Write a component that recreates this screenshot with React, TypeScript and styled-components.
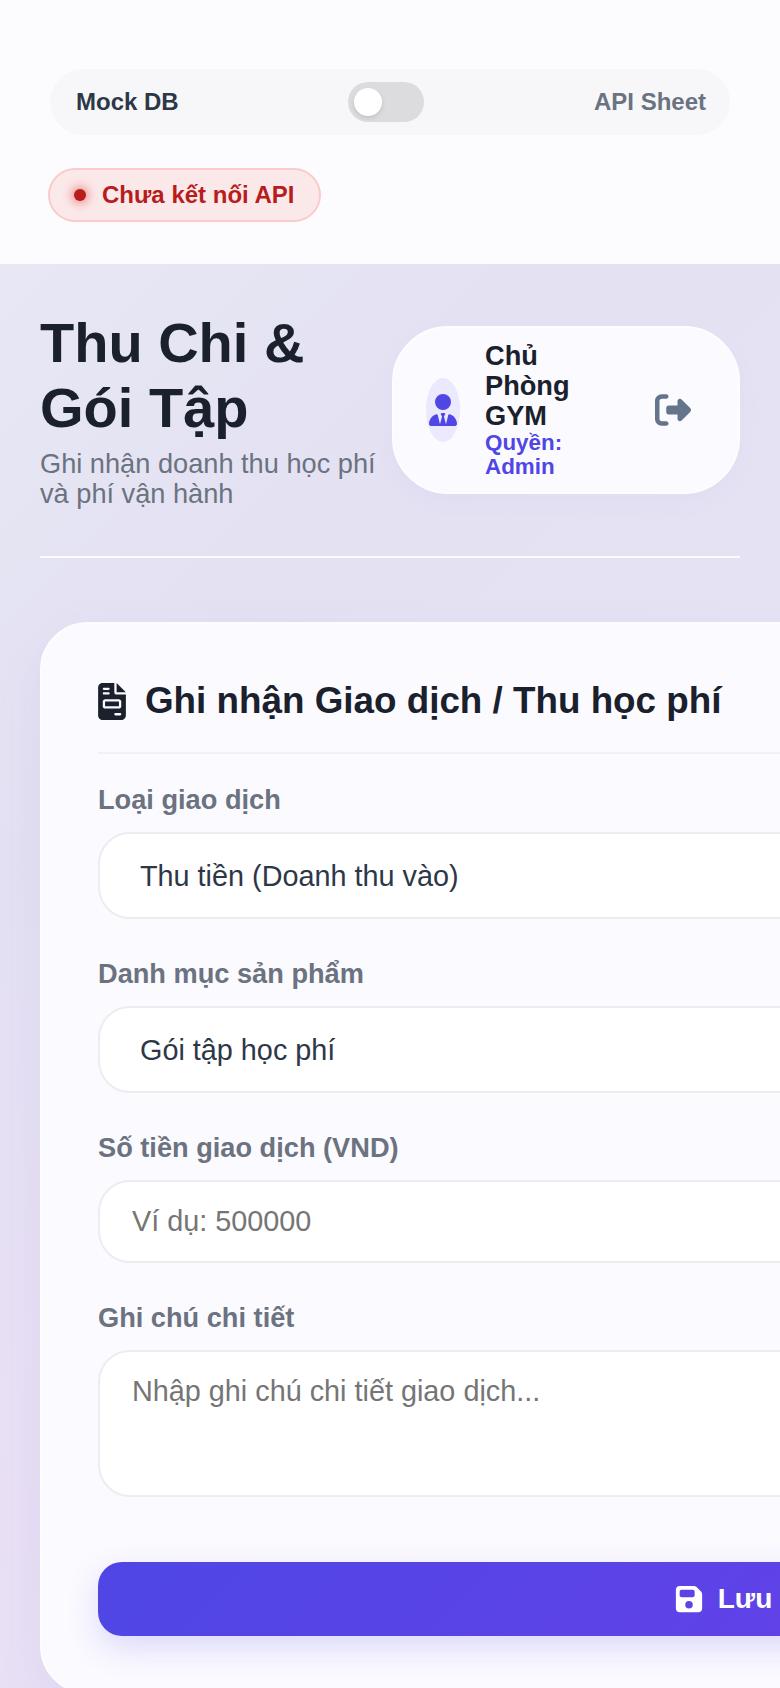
import React from 'react';
import styled, { createGlobalStyle } from 'styled-components';
import { FaFileInvoice, FaFloppyDisk, FaRightFromBracket, FaUserTie } from 'react-icons/fa6';

const GlobalStyle = createGlobalStyle`
  html,
  body {
    margin: 0;
    padding: 0;
    height: 1688px;
    overflow: hidden;
  }

  body {
    font-family: 'Liberation Sans', Arial, sans-serif;
    background:
      radial-gradient(circle at 0% 90%, #e9e0f5 0%, rgba(233, 224, 245, 0) 45%),
      linear-gradient(135deg, #eaeaf6 0%, #e3e1f2 35%, #e6e4f4 70%, #e8e1f5 100%);
  }

  * {
    box-sizing: border-box;
  }
`;

const Page = styled.div`
  width: 780px;
  height: 1688px;
  overflow: hidden;
`;

const TopPanel = styled.header`
  height: 264px;
  padding: 24px 48px 0;
  background: #fcfcfe;
`;

const TopRule = styled.div`
  height: 1px;
  background: #fafafd;
`;

const SourceBar = styled.div`
  display: flex;
  align-items: center;
  justify-content: space-between;
  height: 66px;
  margin: 44px 2px 0;
  padding: 0 24px 0 26px;
  border-radius: 33px;
  background: #f7f7f9;
`;

const SourceLabel = styled.span<{ $active?: boolean }>`
  font-size: 24px;
  font-weight: 700;
  color: ${(p) => (p.$active ? '#2d3748' : '#6b7280')};
`;

const Toggle = styled.div`
  position: relative;
  width: 76px;
  height: 40px;
  border-radius: 20px;
  background: #dcdcdf;
`;

const Knob = styled.span`
  position: absolute;
  top: 6px;
  left: 6px;
  width: 28px;
  height: 28px;
  border-radius: 50%;
  background: #fff;
  box-shadow: 0 2px 4px rgba(0, 0, 0, 0.12);
`;

const StatusPill = styled.div`
  display: inline-flex;
  align-items: center;
  gap: 16px;
  height: 54px;
  margin-top: 33px;
  padding: 0 24px;
  border: 2px solid #fbcaca;
  border-radius: 27px;
  background: #fbe9ea;
  color: #b91c1c;
  font-size: 24px;
  font-weight: 700;
`;

const StatusDot = styled.span`
  width: 12px;
  height: 12px;
  border-radius: 50%;
  background: #b91c1c;
  box-shadow: 0 0 12px #dc2626;
`;

const Main = styled.main`
  padding: 46px 40px 0;
`;

const PageHeader = styled.div`
  display: flex;
  align-items: center;
  justify-content: space-between;
  width: 700px;
  padding-bottom: 47px;
  border-bottom: 2px solid #fbfaff;
`;

const TitleBlock = styled.div`
  width: 340px;
`;

const Title = styled.h1`
  margin: 0;
  font-size: 56px;
  font-weight: 700;
  color: #1a202c;
`;

const Subtitle = styled.p`
  margin: 9px 0 0;
  font-size: 27.2px;
  line-height: 30px;
  color: #6b7280;
`;

const UserChip = styled.div`
  display: flex;
  align-items: center;
  width: 348px;
  height: 168px;
  padding: 0 32px;
  border: 2px solid #fdfdff;
  border-radius: 56px;
  background: #fbfaff;
  box-shadow: 0 8px 24px rgba(99, 91, 200, 0.03);
`;

const Avatar = styled.div`
  display: flex;
  align-items: center;
  justify-content: center;
  flex: 0 0 34px;
  height: 64px;
  border-radius: 50%;
  background: #eae9fd;
  color: #4f46e5;
  font-size: 32px;

  svg {
    flex-shrink: 0;
  }
`;

const UserInfo = styled.div`
  width: 120px;
  margin-left: 25px;
`;

const UserName = styled.div`
  font-size: 27.2px;
  line-height: 30px;
  font-weight: 700;
  color: #1a202c;
`;

const UserRole = styled.div`
  font-size: 22.4px;
  line-height: 24px;
  font-weight: 700;
  color: #4f46e5;
`;

const LogoutButton = styled.div`
  display: flex;
  margin-left: 50px;
  color: #64748b;
  font-size: 36px;
`;

const FormCard = styled.section`
  width: 1366px;
  margin-top: 64px;
  padding: 56px;
  border: 2px solid #fdfdff;
  border-radius: 48px;
  background: #fbfaff;
  box-shadow: 0 16px 48px rgba(99, 91, 200, 0.08);
`;

const CardHeading = styled.h2`
  display: flex;
  align-items: center;
  gap: 19px;
  margin: 0 0 30px;
  padding-bottom: 30px;
  border-bottom: 2px solid #f1f0f5;
  font-size: 36.8px;
  font-weight: 700;
  color: #1a202c;

  svg {
    flex-shrink: 0;
    width: 28px;
    height: 37px;
  }
`;

const Field = styled.div`
  margin-bottom: 39px;
`;

const Label = styled.label`
  display: block;
  margin-bottom: 16px;
  font-size: 27.2px;
  font-weight: 700;
  color: #6b7280;
`;

const controlStyles = `
  display: block;
  width: 100%;
  padding: 23px 32px;
  border: 2px solid #edecf0;
  border-radius: 32px;
  background: #fff;
  color: #2d3748;
  font-family: 'Liberation Sans', Arial, sans-serif;
  font-size: 28.8px;
  outline: none;
`;

const Select = styled.select`
  ${controlStyles}
  height: 87px;
  padding-left: 36px;
`;

const Input = styled.input`
  ${controlStyles}
`;

const TextArea = styled.textarea`
  ${controlStyles}
  height: 147px;
  resize: none;
`;

const SaveButton = styled.button`
  display: flex;
  align-items: center;
  justify-content: center;
  gap: 14px;
  width: 100%;
  height: 74px;
  margin-top: 65px;
  border: 0;
  border-radius: 24px;
  background: linear-gradient(135deg, #4f46e5, #6d3fea);
  color: #fff;
  font-family: 'Liberation Sans', Arial, sans-serif;
  font-size: 28px;
  font-weight: 700;
  box-shadow: 0 12px 32px rgba(79, 70, 229, 0.18);

  svg {
    font-size: 30px;
  }
`;

export default function App() {
  return (
    <Page>
      <GlobalStyle />
      <TopPanel>
        <TopRule />
        <SourceBar>
          <SourceLabel $active>Mock DB</SourceLabel>
          <Toggle>
            <Knob />
          </Toggle>
          <SourceLabel>API Sheet</SourceLabel>
        </SourceBar>
        <StatusPill>
          <StatusDot />
          Chưa kết nối API
        </StatusPill>
      </TopPanel>
      <Main>
        <PageHeader>
          <TitleBlock>
            <Title>Thu Chi & Gói Tập</Title>
            <Subtitle>Ghi nhận doanh thu học phí và phí vận hành</Subtitle>
          </TitleBlock>
          <UserChip>
            <Avatar>
              <FaUserTie />
            </Avatar>
            <UserInfo>
              <UserName>Chủ Phòng GYM</UserName>
              <UserRole>Quyền: Admin</UserRole>
            </UserInfo>
            <LogoutButton>
              <FaRightFromBracket />
            </LogoutButton>
          </UserChip>
        </PageHeader>
        <FormCard>
          <CardHeading>
            <FaFileInvoice />
            Ghi nhận Giao dịch / Thu học phí
          </CardHeading>
          <Field>
            <Label>Loại giao dịch</Label>
            <Select defaultValue="in">
              <option value="in">Thu tiền (Doanh thu vào)</option>
            </Select>
          </Field>
          <Field>
            <Label>Danh mục sản phẩm</Label>
            <Select defaultValue="plan">
              <option value="plan">Gói tập học phí</option>
            </Select>
          </Field>
          <Field>
            <Label>Số tiền giao dịch (VND)</Label>
            <Input type="number" placeholder="Ví dụ: 500000" />
          </Field>
          <Field>
            <Label>Ghi chú chi tiết</Label>
            <TextArea placeholder="Nhập ghi chú chi tiết giao dịch..." />
          </Field>
          <SaveButton>
            <FaFloppyDisk />
            Lưu
          </SaveButton>
        </FormCard>
      </Main>
    </Page>
  );
}
